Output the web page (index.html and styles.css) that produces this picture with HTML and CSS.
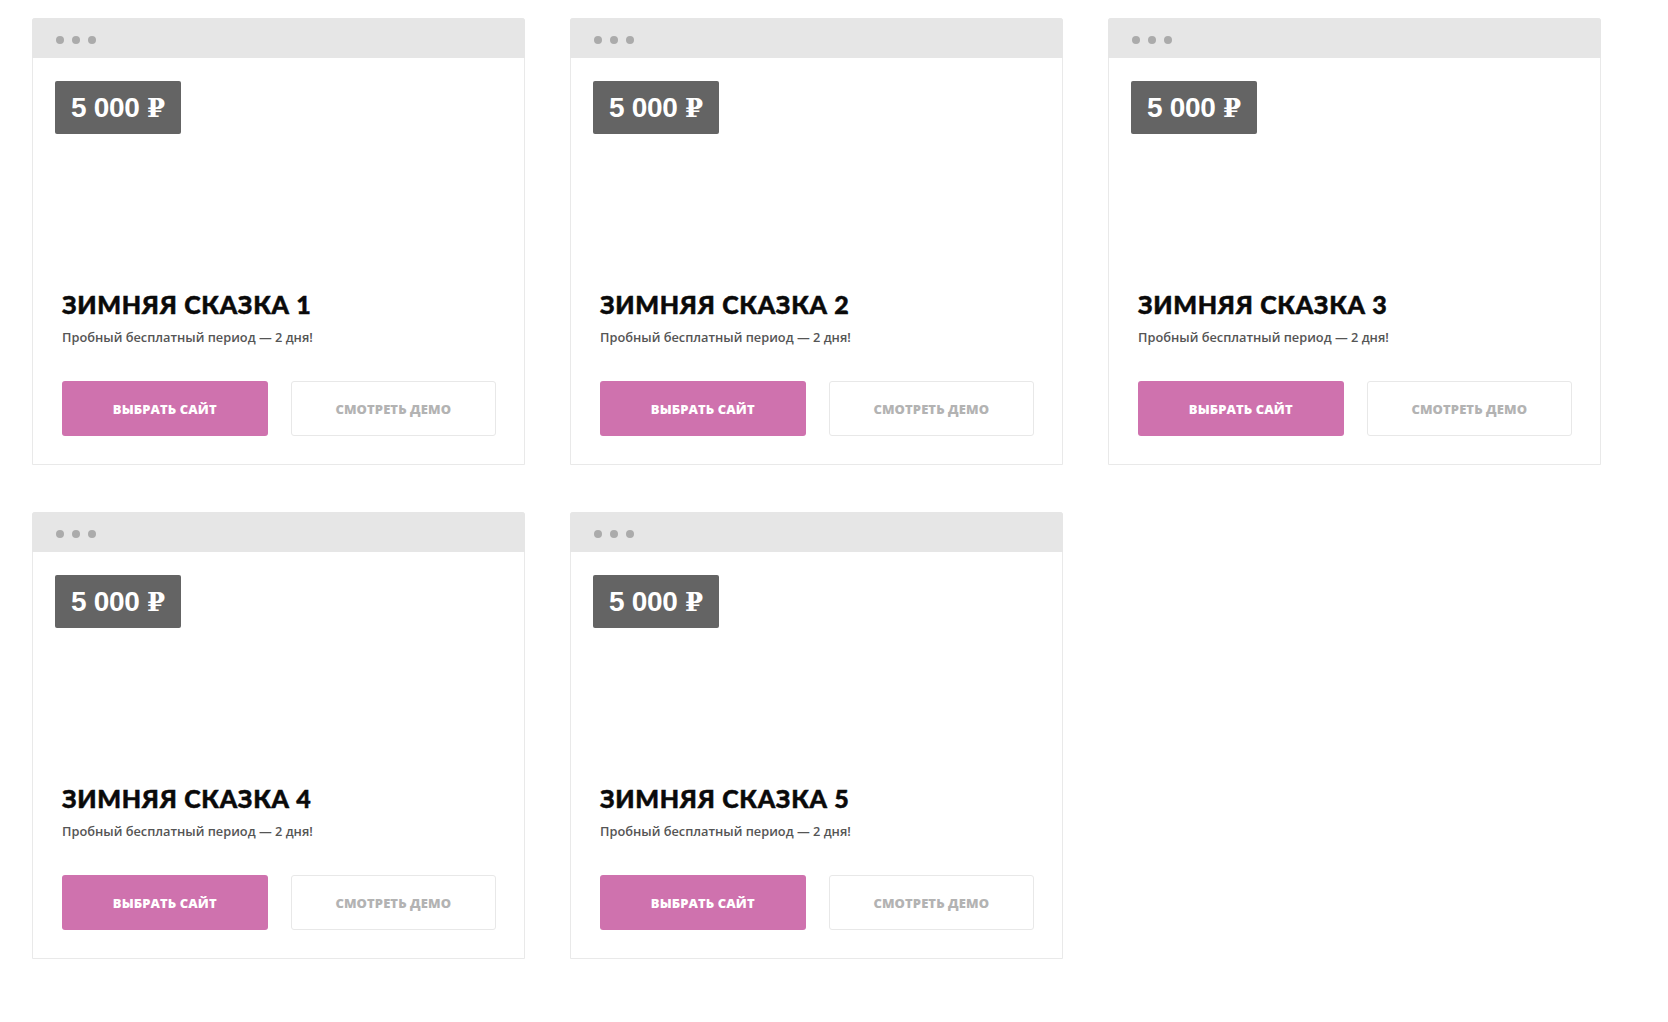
FILE: index.html
```html
<!DOCTYPE html>
<html lang="ru">
<head>
<meta charset="utf-8">
<title>Шаблоны</title>
<link rel="stylesheet" href="styles.css">
</head>
<body>
<div class="grid">
  <div class="card">
    <div class="bar"><span class="dot"></span><span class="dot"></span><span class="dot"></span></div>
    <div class="body">
      <div class="price">5 000 <span class="rub">₽</span></div>
      <div class="info">
        <h2 class="title">ЗИМНЯЯ СКАЗКА 1</h2>
        <p class="sub">Пробный бесплатный период — 2 дня!</p>
      </div>
      <div class="actions">
        <a class="btn btn-primary">ВЫБРАТЬ САЙТ</a>
        <a class="btn btn-ghost">СМОТРЕТЬ ДЕМО</a>
      </div>
    </div>
  </div>
  <div class="card">
    <div class="bar"><span class="dot"></span><span class="dot"></span><span class="dot"></span></div>
    <div class="body">
      <div class="price">5 000 <span class="rub">₽</span></div>
      <div class="info">
        <h2 class="title">ЗИМНЯЯ СКАЗКА 2</h2>
        <p class="sub">Пробный бесплатный период — 2 дня!</p>
      </div>
      <div class="actions">
        <a class="btn btn-primary">ВЫБРАТЬ САЙТ</a>
        <a class="btn btn-ghost">СМОТРЕТЬ ДЕМО</a>
      </div>
    </div>
  </div>
  <div class="card">
    <div class="bar"><span class="dot"></span><span class="dot"></span><span class="dot"></span></div>
    <div class="body">
      <div class="price">5 000 <span class="rub">₽</span></div>
      <div class="info">
        <h2 class="title">ЗИМНЯЯ СКАЗКА 3</h2>
        <p class="sub">Пробный бесплатный период — 2 дня!</p>
      </div>
      <div class="actions">
        <a class="btn btn-primary">ВЫБРАТЬ САЙТ</a>
        <a class="btn btn-ghost">СМОТРЕТЬ ДЕМО</a>
      </div>
    </div>
  </div>
  <div class="card">
    <div class="bar"><span class="dot"></span><span class="dot"></span><span class="dot"></span></div>
    <div class="body">
      <div class="price">5 000 <span class="rub">₽</span></div>
      <div class="info">
        <h2 class="title">ЗИМНЯЯ СКАЗКА 4</h2>
        <p class="sub">Пробный бесплатный период — 2 дня!</p>
      </div>
      <div class="actions">
        <a class="btn btn-primary">ВЫБРАТЬ САЙТ</a>
        <a class="btn btn-ghost">СМОТРЕТЬ ДЕМО</a>
      </div>
    </div>
  </div>
  <div class="card">
    <div class="bar"><span class="dot"></span><span class="dot"></span><span class="dot"></span></div>
    <div class="body">
      <div class="price">5 000 <span class="rub">₽</span></div>
      <div class="info">
        <h2 class="title">ЗИМНЯЯ СКАЗКА 5</h2>
        <p class="sub">Пробный бесплатный период — 2 дня!</p>
      </div>
      <div class="actions">
        <a class="btn btn-primary">ВЫБРАТЬ САЙТ</a>
        <a class="btn btn-ghost">СМОТРЕТЬ ДЕМО</a>
      </div>
    </div>
  </div>
</div>
</body>
</html>
```

FILE: styles.css
```css
* { box-sizing: border-box; }

html, body {
  margin: 0;
  padding: 0;
  background: #ffffff;
}

body {
  font-family: "Open Sans", "Noto Sans", sans-serif;
  padding: 18px 0 0 32px;
}

.grid {
  display: grid;
  grid-template-columns: repeat(3, 493px);
  column-gap: 45px;
  row-gap: 47px;
}

.card {
  height: 447px;
  border: 1px solid #e9e9e9;
  border-radius: 3px 3px 0 0;
  display: flex;
  flex-direction: column;
  background: #fff;
}

.bar {
  height: 40px;
  flex: none;
  background: #e6e6e6;
  border-radius: 3px 3px 0 0;
  display: flex;
  align-items: center;
  gap: 8px;
  padding: 3px 0 0 24px;
  margin: -1px -1px 0 -1px;
}

.dot {
  width: 8px;
  height: 8px;
  border-radius: 50%;
  background: #ababab;
}

.body {
  flex: 1;
  display: flex;
  flex-direction: column;
  padding: 22px 28px 28px 29px;
}

.price {
  align-self: flex-start;
  margin-left: -7px;
  margin-top: 1px;
  height: 53px;
  padding: 0 16px 0 16px;
  background: #646464;
  border-radius: 2px;
  color: #fff;
  font-family: "Liberation Sans", Arial, sans-serif;
  font-weight: 700;
  font-size: 28px;
  line-height: 54px;
  letter-spacing: -0.3px;
}

.rub {
  font-family: "DejaVu Serif", serif;
  font-weight: 700;
  font-size: 26px;
}

.info {
  margin-top: auto;
}

.title {
  margin: 0;
  font-family: Lato, "Open Sans", sans-serif;
  font-weight: 900;
  font-size: 25px;
  line-height: 30px;
  color: #0a0a0a;
  letter-spacing: 0.7px;
  -webkit-text-stroke: 0.5px #0a0a0a;
}

.sub {
  margin: 9px 0 0;
  font-family: "Open Sans", sans-serif;
  font-weight: 600;
  font-size: 12.8px;
  line-height: 18px;
  color: #555;
}

.actions {
  margin-top: 35px;
  display: flex;
  gap: 23px;
}

.btn {
  width: 206px;
  height: 55px;
  display: flex;
  align-items: center;
  justify-content: center;
  border-radius: 3px;
  font-family: "Open Sans", sans-serif;
  font-weight: 800;
  font-size: 13px;
  letter-spacing: 0.1px;
}

.btn-primary {
  background: #cf72ae;
  color: #fff;
}

.btn-ghost {
  background: #fff;
  border: 1px solid #e8e8e8;
  color: #b3b3b3;
}
```
